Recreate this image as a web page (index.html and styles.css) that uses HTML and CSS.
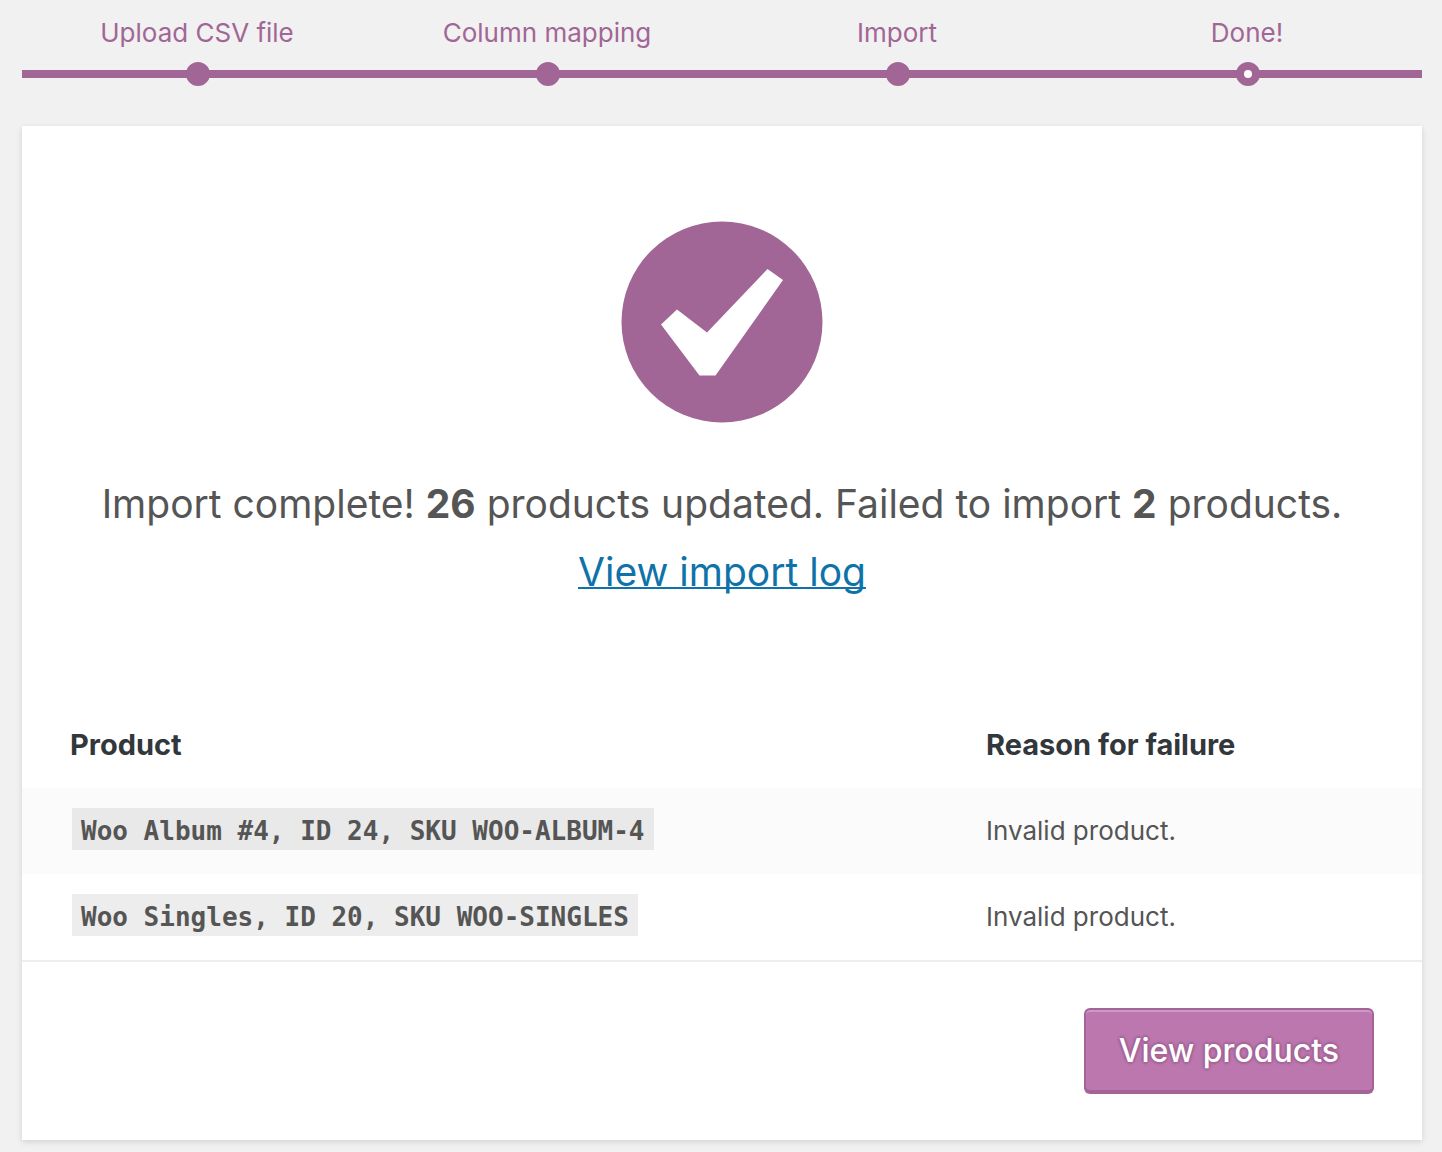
FILE: index.html
```html
<!DOCTYPE html>
<html lang="en">
<head>
<meta charset="utf-8">
<title>Import products</title>
<link rel="stylesheet" href="styles.css">
</head>
<body>
<main class="importer">
  <ol class="steps">
    <li class="step">Upload CSV file</li>
    <li class="step">Column mapping</li>
    <li class="step">Import</li>
    <li class="step step-current" aria-current="step">Done!</li>
  </ol>
  <div class="card">
    <section class="summary">
      <svg class="check" viewBox="0 0 200 200" aria-hidden="true">
        <circle cx="100" cy="100" r="100.500" fill="#a16696"/>
        <path d="M39 102.500L55 87.500L85 110.500L145.500 47L161 58L93.500 153.500H77.500Z" fill="#fff"/>
      </svg>
      <p class="message">Import complete! <strong>26</strong> products updated. Failed to import <strong>2</strong> products. <a class="log-link" href="#log">View import log</a></p>
    </section>
    <table class="log" id="log">
      <thead>
        <tr><th class="col-product" scope="col">Product</th><th scope="col">Reason for failure</th></tr>
      </thead>
      <tbody>
        <tr><th scope="row"><code>Woo Album #4, ID 24, SKU WOO-ALBUM-4</code></th><td>Invalid product.</td></tr>
        <tr><th scope="row"><code>Woo Singles, ID 20, SKU WOO-SINGLES</code></th><td>Invalid product.</td></tr>
      </tbody>
    </table>
    <div class="actions">
      <button class="button" type="button">View products</button>
    </div>
  </div>
</main>
</body>
</html>
```
FILE: styles.css
```css
*,
*::before {
  box-sizing: border-box;
}

body {
  margin: 0;
  background: #f1f1f1;
  color: #555;
  font-family: Inter, sans-serif;
  font-size: 26px;
}

.importer {
  padding: 14px 20px 12px 22px;
}

.steps {
  display: flex;
  margin: 0 0 40px;
  padding: 0;
  list-style: none;
  color: #a16696;
}

.step {
  position: relative;
  flex: 1;
  padding-bottom: 34px;
  background: linear-gradient(#a16696, #a16696) 0 56px / 100% 8px no-repeat;
  line-height: 38px;
  text-align: center;
}

.step::before {
  content: "";
  position: absolute;
  bottom: 0;
  left: calc(50% - 11px);
  width: 24px;
  height: 24px;
  border: 8px solid #a16696;
  border-radius: 50%;
  background: #a16696;
}

.step-current::before {
  background: #fff;
}

.card {
  background: #fff;
  box-shadow: 0 2px 6px rgba(0, 0, 0, 0.13);
}

.summary {
  padding: 96px 48px;
  text-align: center;
}

.check {
  display: block;
  overflow: visible;
  width: 200px;
  height: 200px;
  margin: 0 auto 48px;
}

.message {
  margin: 0;
  font-size: 39px;
  line-height: 68px;
}

.log-link {
  display: block;
  color: #0f72a9;
  text-decoration-thickness: 2px;
  text-decoration-skip-ink: none;
}

.log {
  width: 100%;
  border-collapse: collapse;
  border-bottom: 2px solid #eee;
  line-height: 38px;
  text-align: left;
}

.log th,
.log td {
  padding: 24px 48px;
}

.log .col-product {
  width: 916px;
}

.log thead {
  color: #32373c;
  font-size: 29px;
}

.log tbody tr:nth-child(odd) {
  background: #fbfbfb;
}

.log code {
  margin: 0 2px;
  padding: 8px 9px 4px;
  background: rgba(0, 0, 0, 0.07);
  font-family: "DejaVu Sans Mono", monospace;
  font-size: 26px;
}

.actions {
  display: flex;
  justify-content: flex-end;
  padding: 46px 48px 48px;
}

.button {
  height: 84px;
  padding: 0 33px;
  border: 2px solid #a46497;
  border-radius: 6px;
  background: #bb77ae;
  box-shadow: inset 0 2px 0 rgba(255, 255, 255, 0.25), 0 2px 0 #a46497;
  color: #fff;
  font-family: Inter, sans-serif;
  font-size: 32px;
  font-weight: 500;
  text-shadow: 0 -2px 2px #a46497, 2px 0 2px #a46497, 0 2px 2px #a46497, -2px 0 2px #a46497;
}
```
